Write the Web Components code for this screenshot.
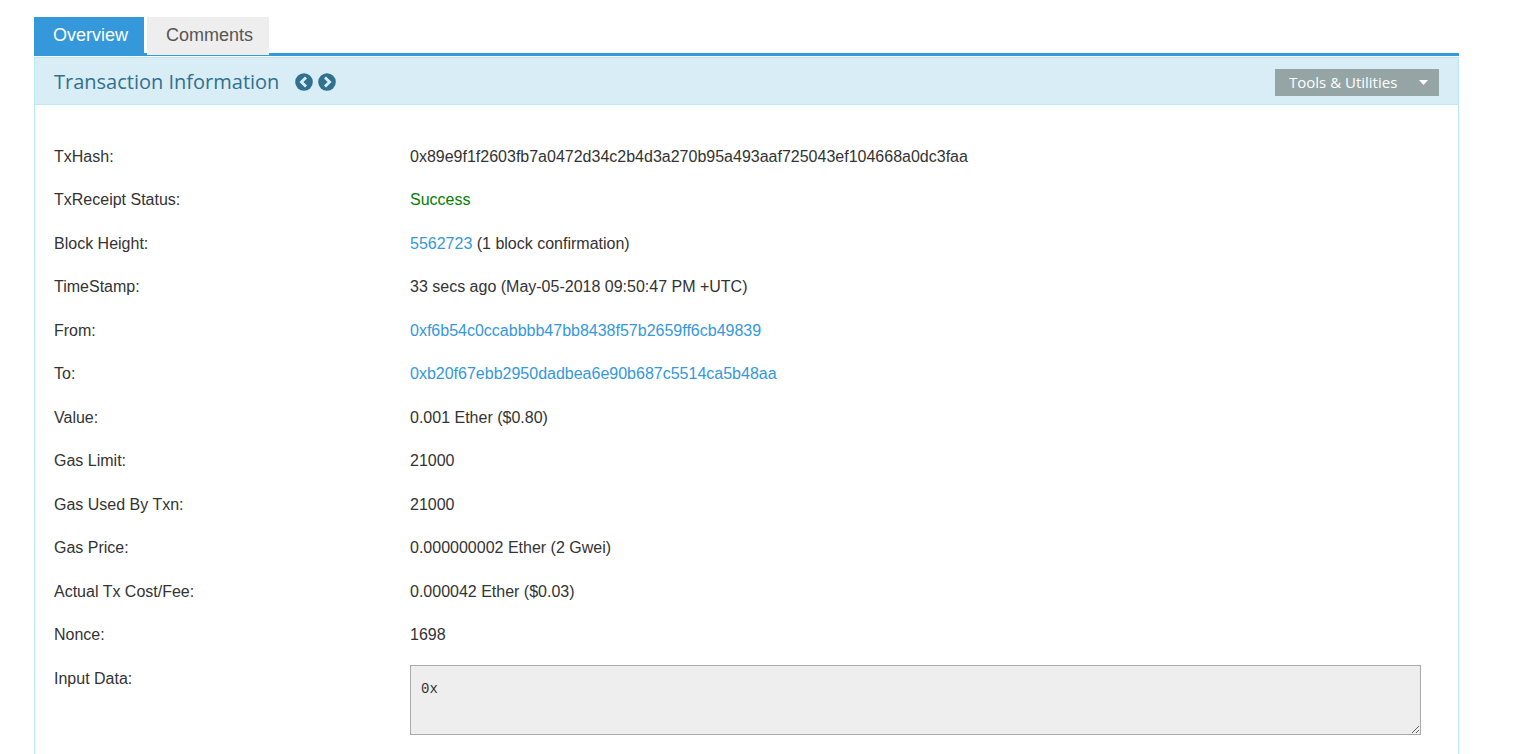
<!DOCTYPE html>
<html lang="en">
<head>
<meta charset="utf-8">
<title>Transaction Information</title>
<style>
html{background:#fff}
body{margin:0;font:16px/24px "Liberation Sans",Arial,sans-serif;color:#333}
</style>
</head>
<body>
<tx-page>
  <tab-bar slot="tabs"></tab-bar>
  <info-panel>
    <panel-title slot="title">Transaction Information</panel-title>
    <tools-menu slot="tools">Tools &amp; Utilities</tools-menu>
    <tx-details></tx-details>
  </info-panel>
</tx-page>
<script>
const define = (name, html) => customElements.define(name, class extends HTMLElement {
  constructor() {
    super();
    this.attachShadow({ mode: "open" }).innerHTML = html;
  }
});

define("tx-page", `
<style>
:host{display:block;padding:17px 68px 0 34px}
main{margin-top:1px}
</style>
<slot name="tabs"></slot>
<main><slot></slot></main>`);

define("tab-bar", `
<style>
:host{display:block}
nav{display:flex;align-items:flex-start;gap:3px;height:36px;border-bottom:3px solid #3498db}
a{box-sizing:border-box;height:38px;padding:6px 16px 6px 19px;font-size:18px;line-height:24px;text-decoration:none;color:#555;background:#eee}
a[aria-current]{color:#fff;background:#3498db}
</style>
<nav aria-label="Transaction views">
  <a href="#overview" aria-current="page">Overview</a>
  <a href="#comments">Comments</a>
</nav>`);

define("info-panel", `
<style>
:host{display:block}
section{border:1px solid #bce8f1}
header{display:flex;align-items:center;justify-content:space-between;height:44px;padding:2px 19px 0;background:#d9edf7;border-bottom:1px solid #bce8f1}
</style>
<section>
  <header><slot name="title"></slot><slot name="tools"></slot></header>
  <slot></slot>
</section>`);

define("panel-title", `
<style>
:host{display:flex;align-items:center;color:#31708f;font-family:"Open Sans",sans-serif}
h3{margin:0 16px 0 0;font-size:20px;line-height:28px;font-weight:400}
nav{display:flex;gap:5px}
a{display:block;color:#31708f}
svg{display:block}
</style>
<h3><slot></slot></h3>
<nav aria-label="Adjacent transactions">
  <a href="#previous" aria-label="Previous"><svg width="18" height="18" viewBox="0 0 18 18"><circle cx="9" cy="9" r="8.8" fill="currentColor"/><path d="M11 4.400 6.400 9l4.600 4.600" fill="none" stroke="#d9edf7" stroke-width="2.800"/></svg></a>
  <a href="#next" aria-label="Next"><svg width="18" height="18" viewBox="0 0 18 18"><circle cx="9" cy="9" r="8.8" fill="currentColor"/><path d="M7 4.400 11.600 9 7 13.600" fill="none" stroke="#d9edf7" stroke-width="2.800"/></svg></a>
</nav>`);

define("tools-menu", `
<style>
:host{display:block}
button{display:flex;align-items:center;justify-content:space-between;width:164px;height:27px;padding:0 11px 0 14px;border:0;background:#95a5a6;color:#fff;font:15px/20px "Open Sans",sans-serif}
</style>
<button type="button" aria-haspopup="menu"><span><slot></slot></span>
<svg width="9" height="5" viewBox="0 0 9 5" aria-hidden="true"><path d="M0 0h9L4.500 5z" fill="#fff"/></svg></button>`);

define("tx-details", `
<style>
:host{display:block;padding:40px 37px 24px 19px}
dl{display:grid;grid-template-rows:repeat(6,43px 44px) auto;margin:0}
dl>div{display:grid;grid-template-columns:minmax(160px,356px) 1fr}
dt,dd{margin:0}
a{color:#3498db;text-decoration:none}
.success{color:green}
textarea{display:block;box-sizing:border-box;width:100%;height:70px;margin:-2px 0 0;padding:13px 10px;border:1px solid #a9a9a9;background:#eee;color:#333;font:14px/20px "Liberation Mono",monospace;resize:both}
</style>
<dl>
  <div><dt>TxHash:</dt><dd>0x89e9f1f2603fb7a0472d34c2b4d3a270b95a493aaf725043ef104668a0dc3faa</dd></div>
  <div><dt>TxReceipt Status:</dt><dd class="success">Success</dd></div>
  <div><dt>Block Height:</dt><dd><a href="#block">5562723</a> (1 block confirmation)</dd></div>
  <div><dt>TimeStamp:</dt><dd>33 secs ago (May-05-2018 09:50:47 PM +UTC)</dd></div>
  <div><dt>From:</dt><dd><a href="#from">0xf6b54c0ccabbbb47bb8438f57b2659ff6cb49839</a></dd></div>
  <div><dt>To:</dt><dd><a href="#to">0xb20f67ebb2950dadbea6e90b687c5514ca5b48aa</a></dd></div>
  <div><dt>Value:</dt><dd>0.001 Ether ($0.80)</dd></div>
  <div><dt>Gas Limit:</dt><dd>21000</dd></div>
  <div><dt>Gas Used By Txn:</dt><dd>21000</dd></div>
  <div><dt>Gas Price:</dt><dd>0.000000002 Ether (2 Gwei)</dd></div>
  <div><dt>Actual Tx Cost/Fee:</dt><dd>0.000042 Ether ($0.03)</dd></div>
  <div><dt>Nonce:</dt><dd>1698</dd></div>
  <div><dt><label for="input-data">Input Data:</label></dt><dd><textarea id="input-data" readonly>0x</textarea></dd></div>
</dl>`);
</script>
</body>
</html>
